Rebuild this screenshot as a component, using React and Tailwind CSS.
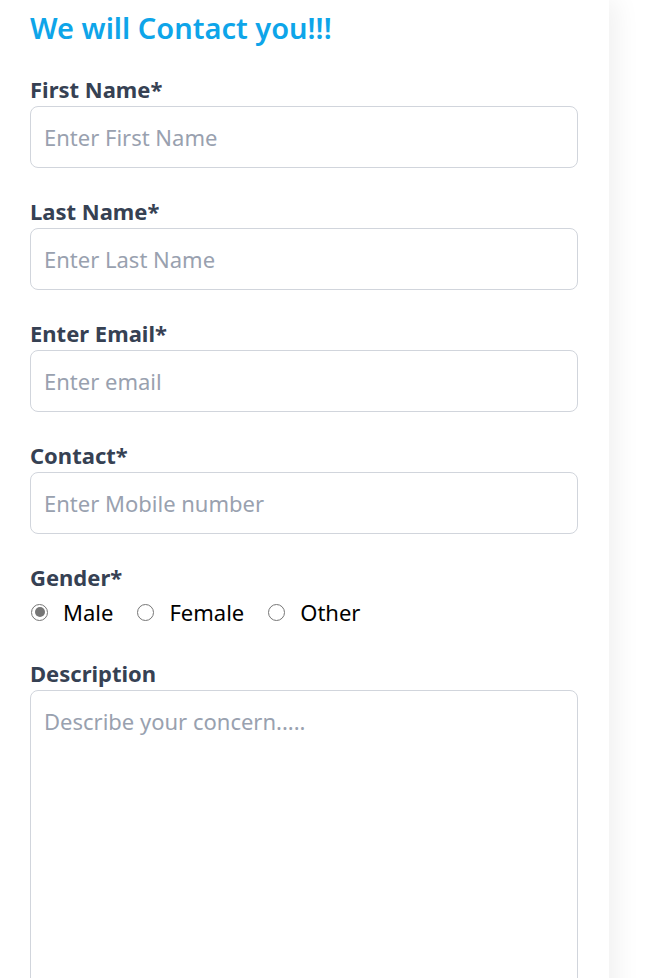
import React, { useState } from 'react';

const fields = [
  { label: 'First Name*', placeholder: 'Enter First Name' },
  { label: 'Last Name*', placeholder: 'Enter Last Name' },
  { label: 'Enter Email*', placeholder: 'Enter email' },
  { label: 'Contact*', placeholder: 'Enter Mobile number' },
];

const Radio = ({ label, checked, onSelect }) => (
  <label className="flex items-center cursor-pointer" onClick={onSelect}>
    <span className="w-[17px] h-[17px] rounded-full border border-[#767676] flex items-center justify-center">
      {checked && <span className="w-[10px] h-[10px] rounded-full bg-[#767676]" />}
    </span>
    <span className="ml-[15px] text-black">{label}</span>
  </label>
);

const App = () => {
  const [gender, setGender] = useState('Male');

  return (
    <div className="min-h-screen bg-white font-['Noto_Sans',sans-serif] overflow-hidden">
      <div className="w-[609px] min-h-[978px] bg-white shadow-[8px_0_24px_rgba(0,0,0,0.06)] pl-[30px] pr-[31px]">
        <h2 className="text-[29px] leading-[42px] pt-[7px] font-semibold text-[#0ea5e9] mb-[24px]">
          We will Contact you!!!
        </h2>

        {fields.map((f) => (
          <div key={f.label} className="mb-[27px]">
            <label className="block text-[22px] leading-[33px] font-bold text-gray-700">
              {f.label}
            </label>
            <input
              placeholder={f.placeholder}
              className="w-full h-[62px] border border-gray-300 rounded-lg px-[13px] text-[22px] placeholder:text-gray-400 outline-none"
            />
          </div>
        ))}

        <div className="mb-[27px]">
          <label className="block text-[22px] leading-[33px] font-bold text-gray-700">Gender*</label>
          <div className="flex items-center gap-[24px] text-[22px] leading-[36px] ml-[1px]">
            {['Male', 'Female', 'Other'].map((g) => (
              <Radio key={g} label={g} checked={gender === g} onSelect={() => setGender(g)} />
            ))}
          </div>
        </div>

        <div>
          <label className="block text-[22px] leading-[33px] font-bold text-gray-700">Description</label>
          <textarea
            placeholder="Describe your concern....."
            className="w-full h-[320px] border border-gray-300 rounded-lg px-[13px] py-[14px] text-[22px] placeholder:text-gray-400 outline-none resize-none block"
          />
        </div>
      </div>
    </div>
  );
};

export default App;
